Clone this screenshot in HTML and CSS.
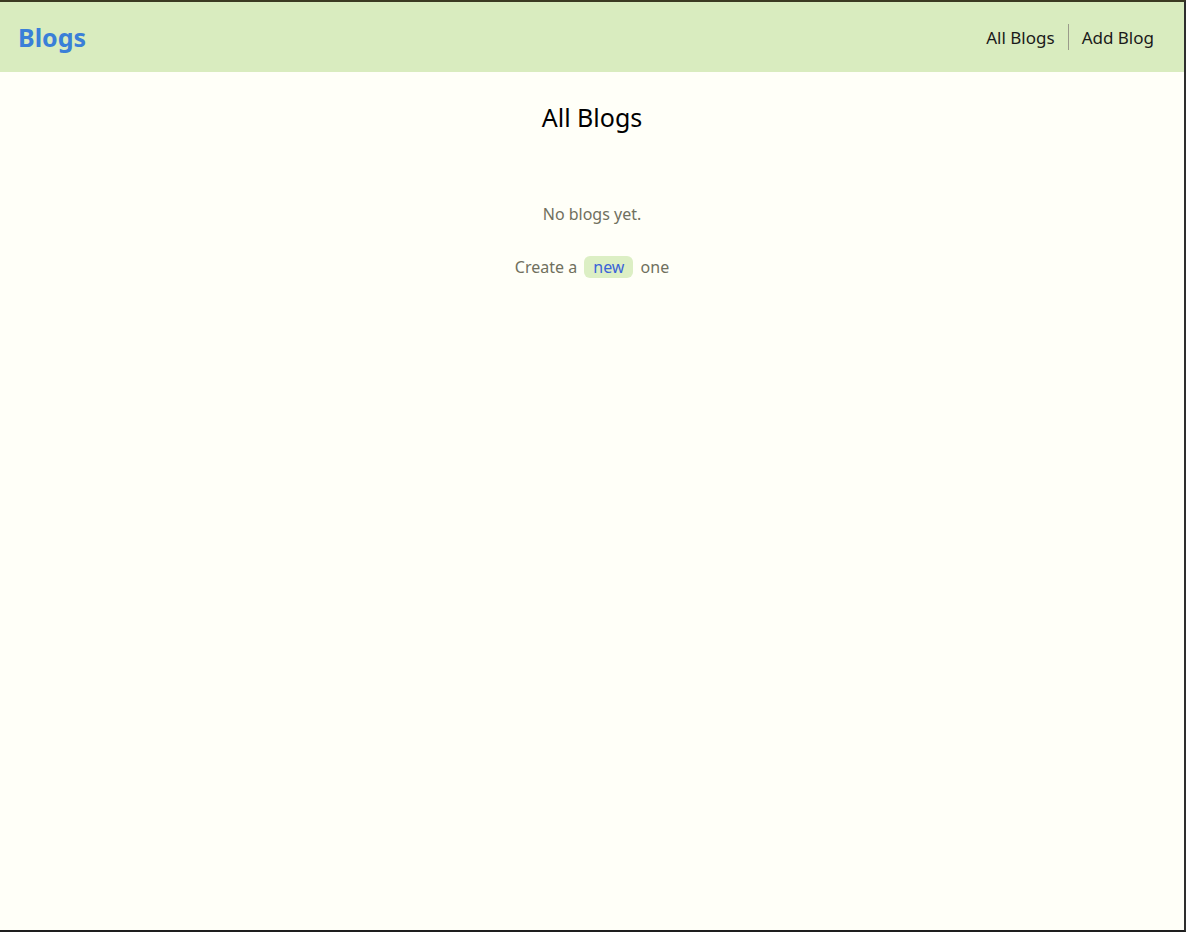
FILE: index.html
```html
<!DOCTYPE html>
<html lang="en">
<head>
<meta charset="utf-8">
<title>Blogs</title>
<link rel="stylesheet" href="styles.css">
</head>
<body>
<div class="page">
  <header class="navbar">
    <a class="brand" href="#">Blogs</a>
    <nav class="links">
      <a class="link" href="#">All Blogs</a>
      <span class="divider"></span>
      <a class="link" href="#">Add Blog</a>
    </nav>
  </header>
  <main class="content">
    <h1 class="title">All Blogs</h1>
    <p class="empty">No blogs yet.</p>
    <p class="empty create">Create a <a class="pill" href="#">new</a> one</p>
  </main>
</div>
</body>
</html>
```
FILE: styles.css
```css
* { box-sizing: border-box; }
html, body { margin: 0; padding: 0; }
body {
  font-family: "Noto Sans", "Open Sans", sans-serif;
  background: #fffff8;
}
.page {
  height: 932px;
  border-top: 2px solid #3b3a22;
  border-right: 2px solid #2e2e2e;
  border-bottom: 2px solid #1e1e1e;
  display: flex;
  flex-direction: column;
}
.navbar {
  height: 70px;
  background: #d9ecbf;
  display: flex;
  align-items: center;
  justify-content: space-between;
  padding: 0 30px 0 18px;
}
.brand {
  color: #3a7fd8;
  font-weight: 700;
  font-size: 25px;
  text-decoration: none;
}
.links {
  display: flex;
  align-items: center;
}
.link {
  color: #1a1a1a;
  text-decoration: none;
  font-size: 17px;
}
.divider {
  width: 1px;
  height: 26px;
  background: #9a9a8a;
  margin: 0 13px;
}
.content {
  flex: 1;
  display: flex;
  flex-direction: column;
  align-items: center;
}
.title {
  margin: 28px 0 0;
  font-size: 25px;
  font-weight: 400;
  color: #000;
}
.empty {
  margin: 69px 0 0;
  font-size: 16px;
  color: #70705e;
}
.create {
  margin-top: 31px;
}
.pill {
  display: inline-block;
  background: #dcefc4;
  color: #3a63d8;
  text-decoration: none;
  padding: 0 9px;
  border-radius: 6px;
  margin: 0 3px;
}
```
